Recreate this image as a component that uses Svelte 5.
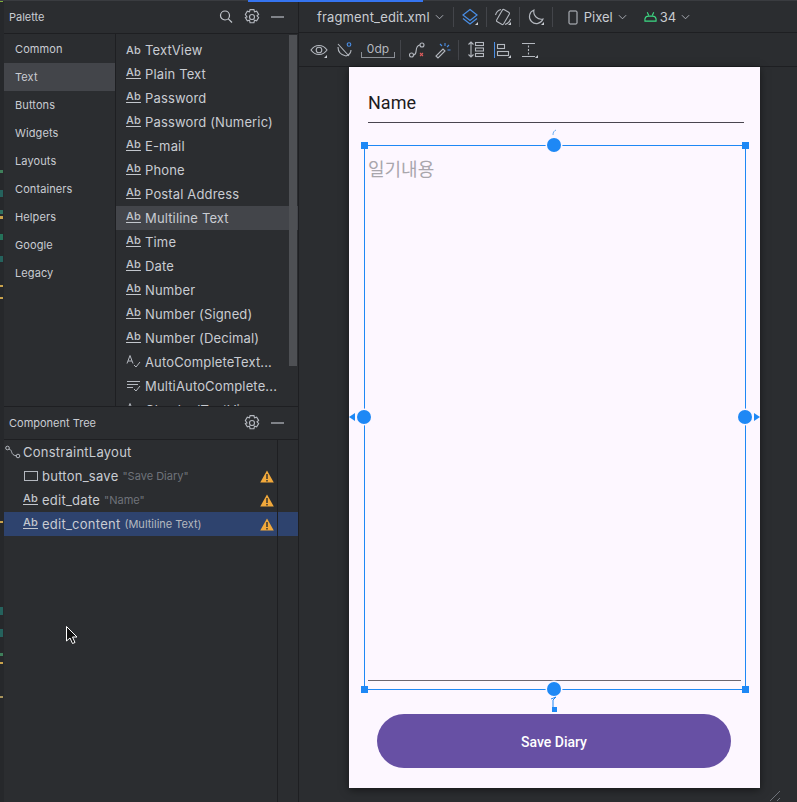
<script>
	const categories = ['Common', 'Text', 'Buttons', 'Widgets', 'Layouts', 'Containers', 'Helpers', 'Google', 'Legacy'];
	const widgets = [
		['view', 'TextView'],
		['edit', 'Plain Text'],
		['edit', 'Password'],
		['edit', 'Password (Numeric)'],
		['edit', 'E-mail'],
		['edit', 'Phone'],
		['edit', 'Postal Address'],
		['edit', 'Multiline Text'],
		['edit', 'Time'],
		['edit', 'Date'],
		['edit', 'Number'],
		['edit', 'Number (Signed)'],
		['edit', 'Number (Decimal)'],
		['auto', 'AutoCompleteText...'],
		['multi', 'MultiAutoComplete...'],
		['auto', 'CheckedTextView']
	];
	const tree = [
		{ icon: 'button', name: 'button_save', hint: '"Save Diary"' },
		{ icon: 'edit', name: 'edit_date', hint: '"Name"' },
		{ icon: 'edit', name: 'edit_content', hint: '(Multiline Text)', selected: true }
	];
	const marks = [
		[0, 2, '#7fae3c'], [170, 3, '#3f7f5b'], [190, 7, '#25625d'], [210, 4, '#2f7263'], [216, 3, '#c9a24c'],
		[234, 6, '#25725a'], [256, 6, '#25625d'], [285, 2, '#c9a24c'], [297, 2, '#c9a24c'], [521, 2, '#c9a24c'],
		[607, 8, '#25625d'], [629, 8, '#25625d'], [653, 3, '#3f7f5b'], [662, 2, '#c9a24c'], [696, 2, '#a8935c']
	];
</script>

{#snippet gear()}
	<svg class="icon" width="16" height="16" viewBox="1 1 14 14" fill="none" stroke="#b4b8bf">
		<path d="M6.300 1.500h3.400l.5 2 1.900-.6 1.700 2.900-1.400 1.200 1.400 1.500-1.700 2.900-1.900-.6-.5 2.200H6.300l-.5-2.200-1.900.6-1.700-2.900L3.600 8 2.200 5.800l1.700-2.900 1.900.6z" />
		<circle cx="8" cy="8" r="2.200" />
	</svg>
{/snippet}

{#snippet minimize()}
	<svg class="icon" width="16" height="16" viewBox="0 0 16 16"><path d="M2 8h13" stroke="#a5a9b0" stroke-width="1.400" /></svg>
{/snippet}

{#snippet corner()}
	<path d="M14 17h3v-3z" fill="#c8ccd2" stroke="none" />
{/snippet}

{#snippet chevron()}
	<svg class="chev" width="9" height="6" viewBox="0 0 10 6"><path d="M1 1l4 4 4-4" fill="none" stroke="#b4b8bf" /></svg>
{/snippet}

{#snippet widgetIcon(kind)}
	{#if kind === 'view'}
		<span class="ab">Ab</span>
	{:else if kind === 'edit'}
		<span class="ab under">Ab</span>
	{:else if kind === 'button'}
		<svg width="16" height="14" viewBox="0 0 16 14"><rect x="1.500" y="2.500" width="13" height="9" fill="none" stroke="#b4b8bf" /></svg>
	{:else if kind === 'auto'}
		<svg width="16" height="14" viewBox="0 0 16 14" fill="none" stroke="#b4b8bf">
			<path d="M1 8.500 4 .5l3 8M2 6h4" />
			<path d="M8 10l2 2 4-5" />
		</svg>
	{:else}
		<svg width="16" height="14" viewBox="0 0 16 14" fill="none" stroke="#b4b8bf">
			<path d="M1 2.500h13M1 5.500h11M1 8.500h6" />
			<path d="M8 10l2 2 4-5" />
		</svg>
	{/if}
{/snippet}

<div class="window">
	<div class="strip">
		{#each marks as [top, height, color]}
			<i class="mark" style="top: {top}px; height: {height}px; background: {color}"></i>
		{/each}
	</div>

	<aside class="side">
		<section class="palette">
			<header class="pane-head">
				<span class="title">Palette</span>
				<svg class="icon" width="16" height="16" viewBox="0 0 16 16" fill="none" stroke="#c3c7cd" stroke-width="1.200">
					<circle cx="6" cy="6.500" r="4.500" /><path d="M9.300 9.800 13 13.500" />
				</svg>
				{@render gear()}
				{@render minimize()}
			</header>
			<div class="palette-body">
				<ul class="cats">
					{#each categories as cat}
						<li class:active={cat === 'Text'}>{cat}</li>
					{/each}
				</ul>
				<ul class="widgets">
					{#each widgets as [kind, label]}
						<li class:active={label === 'Multiline Text'}>
							<span class="w-icon">{@render widgetIcon(kind)}</span>
							<span>{label}</span>
						</li>
					{/each}
				</ul>
				<div class="scrollbar"></div>
			</div>
		</section>

		<section class="tree">
			<header class="pane-head tree-head">
				<span class="title">Component Tree</span>
				{@render gear()}
				{@render minimize()}
			</header>
			<div class="tree-body">
				<div class="tree-root">
					<svg width="16" height="14" viewBox="0 0 16 14" fill="none" stroke="#b4b8bf">
						<circle cx="2.500" cy="3" r="1.800" /><circle cx="13" cy="11" r="1.800" />
						<path d="M4 4c4 1 1 6 7.300 6.800" />
					</svg>
					<span>ConstraintLayout</span>
				</div>
				{#each tree as row}
					<div class="tree-row" class:selected={row.selected}>
						<span class="t-icon">{@render widgetIcon(row.icon)}</span>
						<span class="t-name">{row.name}</span>
						<span class="t-hint">{row.hint}</span>
						<svg class="warn" width="14" height="13" viewBox="0 0 14 13">
							<path d="M7 .5 13.800 12.500H.2z" fill="#f2a93b" />
							<path d="M7 4v5M7 10v1.500" stroke="#2b2d30" stroke-width="1.400" />
						</svg>
					</div>
				{/each}
				<div class="tree-rule"></div>
				<svg class="cursor" width="13" height="19" viewBox="0 0 13 19">
					<path d="M.5.500v14.500l3.500-3 2.500 5.500 2.500-1-2.500-5.500h4.500z" fill="#111" stroke="#fff" />
				</svg>
			</div>
		</section>
	</aside>

	<main class="editor">
		<div class="bar bar-top">
			<span class="file">fragment_edit.xml</span>
			{@render chevron()}
			<i class="sep first"></i>
			<svg class="tool" width="18" height="18" viewBox="0 0 18 18" fill="none" stroke="#4a8fe7" stroke-width="1.200">
				<path d="M9 1.500 16 7l-7 5.500L2 7z" /><path d="M2 10.500 9 16l7-5.500" />{@render corner()}
			</svg>
			<i class="sep"></i>
			<svg class="tool" width="18" height="18" viewBox="0 0 18 18" fill="none" stroke="#b4b8bf" stroke-width="1.100">
				<rect x="5" y="2" width="8" height="14" rx="1.500" transform="rotate(30 9 9)" /><path d="M1.500 7A8 8 0 0 1 7 1.500M16.500 11A8 8 0 0 1 11 16.500" />{@render corner()}
			</svg>
			<i class="sep"></i>
			<svg class="tool" width="18" height="18" viewBox="0 0 18 18" fill="none" stroke="#b4b8bf" stroke-width="1.100">
				<path d="M7 2a7 7 0 1 0 9 9A7.500 7.500 0 0 1 7 2z" />{@render corner()}
			</svg>
			<i class="sep"></i>
			<svg class="phone-ic" width="10" height="15" viewBox="0 0 10 15"><rect x="1" y="1" width="8" height="13" rx="1" fill="none" stroke="#c3c7cd" /></svg>
			<span class="label">Pixel</span>
			{@render chevron()}
			<svg class="android" width="13" height="12" viewBox="0 0 14 12" fill="none" stroke="#3ddc84" stroke-width="1.200">
				<path d="M1 10.500V8a4 4 0 0 1 4-3h4a4 4 0 0 1 4 3v2.500zM3.500 1l1.500 3M10.500 1 9 4" />
			</svg>
			<span class="label api">34</span>
			{@render chevron()}
		</div>

		<div class="bar bar-sub">
			<svg class="sub-tool eye" width="18" height="18" viewBox="0 0 18 18" fill="none" stroke="#b4b8bf" stroke-width="1.100">
				<path d="M1 9c4-6 12-6 16 0-4 6-12 6-16 0z" /><circle cx="9" cy="9" r="2.800" />{@render corner()}
			</svg>
			<svg class="sub-tool ghost" width="16" height="18" viewBox="0 0 16 18" fill="none" stroke="#b4b8bf" stroke-width="1.100">
				<path d="M1 3 12 15M1 6c0 5 3 8 8 9 3-1 5-3 5-6" /><circle cx="12" cy="3.500" r="1.800" stroke="#4a8fe7" />
			</svg>
			<span class="margin">0dp</span>
			<i class="sep sub-sep"></i>
			<svg class="sub-tool path" width="16" height="18" viewBox="0 0 16 18" fill="none" stroke="#b4b8bf" stroke-width="1.100">
				<circle cx="2.500" cy="14" r="2" /><circle cx="13" cy="4" r="2" /><path d="M4.500 14c5-.5 0-9 6.500-10" />
				<path d="M11 12l3 3M14 12l-3 3" stroke="#db5c5c" />
			</svg>
			<svg class="sub-tool wand" width="16" height="18" viewBox="0 0 16 18" fill="none" stroke="#b4b8bf" stroke-width="1.100">
				<path d="M1 15l2 2 7-7-2-2z" /><path d="M10 2v3M14 4l-2 2M15.500 9h-3M5 3l2 2" stroke="#4a8fe7" />
			</svg>
			<i class="sep sub-sep after"></i>
			<svg class="sub-tool stack" width="16" height="18" viewBox="0 0 16 18" fill="none" stroke="#b4b8bf" stroke-width="1.100">
				<path d="M3 1v15M.5 3.500 3 1l2.500 2.500M.5 13.500 3 16l2.500-2.500" /><rect x="7.500" y="1.500" width="8" height="3" /><rect x="7.500" y="7" width="8" height="3" /><rect x="7.500" y="12.500" width="8" height="3" />
			</svg>
			<svg class="sub-tool align" width="18" height="18" viewBox="0 0 18 18" fill="none" stroke="#b4b8bf" stroke-width="1.100">
				<path d="M.5 1v16" stroke="#4a8fe7" /><rect x="3.500" y="3.500" width="7" height="4" /><rect x="3.500" y="10.500" width="11" height="4" />{@render corner()}
			</svg>
			<svg class="sub-tool" width="18" height="18" viewBox="0 0 18 18" fill="none" stroke="#b4b8bf" stroke-width="1.100">
				<path d="M1 2.500h13M1 15.500h13M7.500 4.500v2M7.500 8v2M7.500 11.500v2" />{@render corner()}
			</svg>
		</div>

		<div class="canvas">
			<div class="device">
				<div class="name-field">Name</div>
				<div class="content-field">일기내용</div>
				<div class="content-line"></div>
				<button class="save">Save Diary</button>

				<svg class="selection" width="411" height="721" viewBox="349 67 411 721" fill="none">
					<rect x="364.500" y="145.500" width="381" height="544" stroke="#1e88f5" />
					<g fill="#1e88f5">
						<rect x="361" y="142" width="7" height="7" />
						<rect x="742" y="142" width="7" height="7" />
						<rect x="361" y="686" width="7" height="7" />
						<rect x="742" y="686" width="7" height="7" />
					</g>
					<g fill="#1e88f5" stroke="#fdf7ff" stroke-width="3" paint-order="stroke">
						<circle cx="554" cy="145" r="7" />
						<circle cx="554" cy="689" r="7" />
						<circle cx="364" cy="417" r="7" />
						<circle cx="745" cy="417" r="7" />
					</g>
					<path d="M553 135c0-3 1-4 3-5" stroke="#6aaef5" />
					<path d="M551 699l5-2-3 3v7" stroke="#1e88f5" />
					<rect x="552" y="707" width="5" height="5" fill="#1e88f5" />
					<path d="M355 413v8l-6-4z" fill="#1e88f5" />
					<path d="M754 413v8l6-4z" fill="#1e88f5" />
				</svg>
			</div>
			<svg class="grip" width="12" height="12" viewBox="0 0 12 12"><path d="M1 11 11 1M8 11l3-3" stroke="#6f737a" /></svg>
		</div>
	</main>
</div>

<style>
	:global(body) {
		margin: 0;
		background: #2b2d30;
	}
	.window {
		display: flex;
		width: 797px;
		height: 802px;
		overflow: hidden;
		position: relative;
		background: #2b2d30;
		color: #c9ccd2;
		font-family: Inter, 'Liberation Sans', sans-serif;
		font-size: 13px;
	}
	.window::before {
		content: '';
		position: absolute;
		left: 248px;
		top: 0;
		width: 175px;
		height: 2px;
		background: #3574f0;
		z-index: 2;
	}
	.window::after {
		content: '';
		position: absolute;
		left: 0;
		top: 0;
		width: 100%;
		height: 1px;
		background: #3a3c40;
	}
	ul {
		list-style: none;
		margin: 0;
		padding: 0;
	}
	.strip {
		width: 4px;
		flex: none;
		position: relative;
		background: #26282b;
	}
	.mark {
		position: absolute;
		left: 0;
		width: 3px;
	}
	.side {
		width: 294px;
		flex: none;
		display: flex;
		flex-direction: column;
		border-right: 1px solid #1e1f22;
	}
	.palette {
		height: 406px;
		flex: none;
		border-bottom: 1px solid #1e1f22;
		display: flex;
		flex-direction: column;
		overflow: hidden;
	}
	.pane-head {
		height: 33px;
		flex: none;
		display: flex;
		align-items: center;
		gap: 9px;
		padding: 0 13px 0 5px;
		border-bottom: 1px solid #1e1f22;
	}
	.tree-head {
		height: 32px;
	}
	.title {
		font-size: 11px;
		margin-right: auto;
		color: #c9ccd2;
	}
	.icon {
		display: block;
		flex: none;
	}
	.palette-body {
		flex: 1;
		display: flex;
		position: relative;
		min-height: 0;
	}
	.cats {
		width: 111px;
		flex: none;
		border-right: 1px solid #1e1f22;
		padding-top: 1px;
	}
	.cats li {
		height: 28px;
		line-height: 28px;
		padding-left: 11px;
		font-size: 11px;
		letter-spacing: 0.1px;
	}
	.cats li.active {
		background: #43454a;
	}
	.widgets {
		flex: 1;
		padding-top: 4px;
	}
	.widgets li {
		height: 24px;
		display: flex;
		align-items: center;
		padding-left: 10px;
		font-size: 13px;
		letter-spacing: 0.15px;
		white-space: nowrap;
	}
	.widgets li.active {
		background: #43454a;
	}
	.w-icon {
		width: 19px;
		flex: none;
		display: flex;
	}
	.ab {
		font-size: 11px;
		font-weight: 500;
		line-height: 12px;
		color: #c3c7cd;
	}
	.ab.under {
		border-bottom: 1px solid #c3c7cd;
		height: 12px;
		margin-top: -3px;
	}
	.scrollbar {
		position: absolute;
		right: 1px;
		top: 1px;
		width: 8px;
		height: 331px;
		background: #4e5054;
	}
	.tree {
		flex: 1;
		display: flex;
		flex-direction: column;
	}
	.tree-body {
		flex: 1;
		position: relative;
	}
	.tree-root,
	.tree-row {
		height: 24px;
		display: flex;
		align-items: center;
		white-space: nowrap;
		letter-spacing: 0.25px;
	}
	.tree-root {
		padding-left: 1px;
		gap: 2px;
	}
	.tree-row {
		padding-left: 19px;
		position: relative;
	}
	.tree-row.selected {
		background: #2e436e;
	}
	.t-icon {
		width: 19px;
		flex: none;
		display: flex;
	}
	.t-name {
		font-size: 13px;
		color: #c9ccd2;
	}
	.t-hint {
		font-size: 11px;
		letter-spacing: 0;
		margin-left: 4px;
		color: #6f737a;
	}
	.selected .t-hint {
		color: #b4b8bf;
	}
	.warn {
		position: absolute;
		left: 256px;
		top: 6px;
	}
	.tree-rule {
		position: absolute;
		left: 273px;
		top: 0;
		bottom: 0;
		width: 1px;
		background: #1e1f22;
	}
	.cursor {
		position: absolute;
		left: 62px;
		top: 186px;
	}
	.editor {
		flex: 1;
		display: flex;
		flex-direction: column;
		min-width: 0;
	}
	.bar {
		height: 33px;
		flex: none;
		display: flex;
		align-items: center;
		border-bottom: 1px solid #1e1f22;
		box-sizing: border-box;
	}
	.bar-top {
		padding-left: 18px;
		padding-top: 2px;
	}
	.bar-sub {
		height: 34px;
		padding-left: 11px;
	}
	.file {
		font-size: 13px;
		letter-spacing: 0.15px;
	}
	.chev {
		flex: none;
		margin-left: 5px;
	}
	.sep {
		width: 1px;
		height: 20px;
		flex: none;
		background: #43454a;
		margin: 0 7px;
	}
	.sep.first {
		margin-left: 9px;
	}
	.phone-ic {
		margin: 0 6px 0 8px;
	}
	.label {
		font-size: 13px;
	}
	.android {
		margin: 0 3px 0 17px;
	}
	.sub-tool {
		flex: none;
		margin-right: 9px;
	}
	.ghost {
		margin-right: 8px;
	}
	.path,
	.stack {
		margin-right: 10px;
	}
	.wand {
		margin-right: 7px;
	}
	.margin {
		width: 34px;
		flex: none;
		position: relative;
		box-sizing: border-box;
		text-align: center;
		font-size: 12px;
		line-height: 16px;
		border-bottom: 1px solid #8c9097;
		margin-right: 5px;
		color: #b4b8bf;
	}
	.margin::before,
	.margin::after {
		content: '';
		position: absolute;
		bottom: -1px;
		width: 1px;
		height: 6px;
		background: #8c9097;
	}
	.margin::before {
		left: 0;
	}
	.margin::after {
		right: 0;
	}
	.sub-sep {
		margin: 0 8px 0 0;
	}
	.sub-sep.after {
		margin: 0 9px 0 0;
	}
	.canvas {
		flex: 1;
		position: relative;
		background: #2b2d30;
	}
	.device {
		width: 411px;
		height: 721px;
		margin-left: 50px;
		position: relative;
		display: flex;
		flex-direction: column;
		box-sizing: border-box;
		background: #fdf7ff;
		padding: 19px 16px 0 19px;
		box-shadow: 0 2px 8px rgba(0, 0, 0, 0.500);
	}
	.name-field {
		height: 36px;
		line-height: 34px;
		font-family: Roboto, sans-serif;
		font-size: 18px;
		color: #1d1b20;
		border-bottom: 1px solid #49454f;
		flex: none;
	}
	.content-field {
		margin-top: 33px;
		height: 0;
		flex: 1;
		font-family: 'Noto Sans CJK KR', sans-serif;
		font-size: 18px;
		line-height: 24px;
		color: #a9a6ac;
	}
	.content-line {
		height: 1px;
		background: #6b6670;
		margin: 0 0 33px 0;
		width: 373px;
		flex: none;
	}
	.save {
		width: 354px;
		height: 54px;
		flex: none;
		margin: 0 0 20px 9px;
		padding: 2px 0 0;
		border: 0;
		border-radius: 27px;
		background: #6750a4;
		color: #fff;
		font-family: Roboto, sans-serif;
		font-size: 14px;
		font-weight: 500;
	}
	.selection {
		position: absolute;
		left: 0;
		top: 0;
		overflow: visible;
	}
	.grip {
		position: absolute;
		right: 16px;
		bottom: 0;
	}
</style>
